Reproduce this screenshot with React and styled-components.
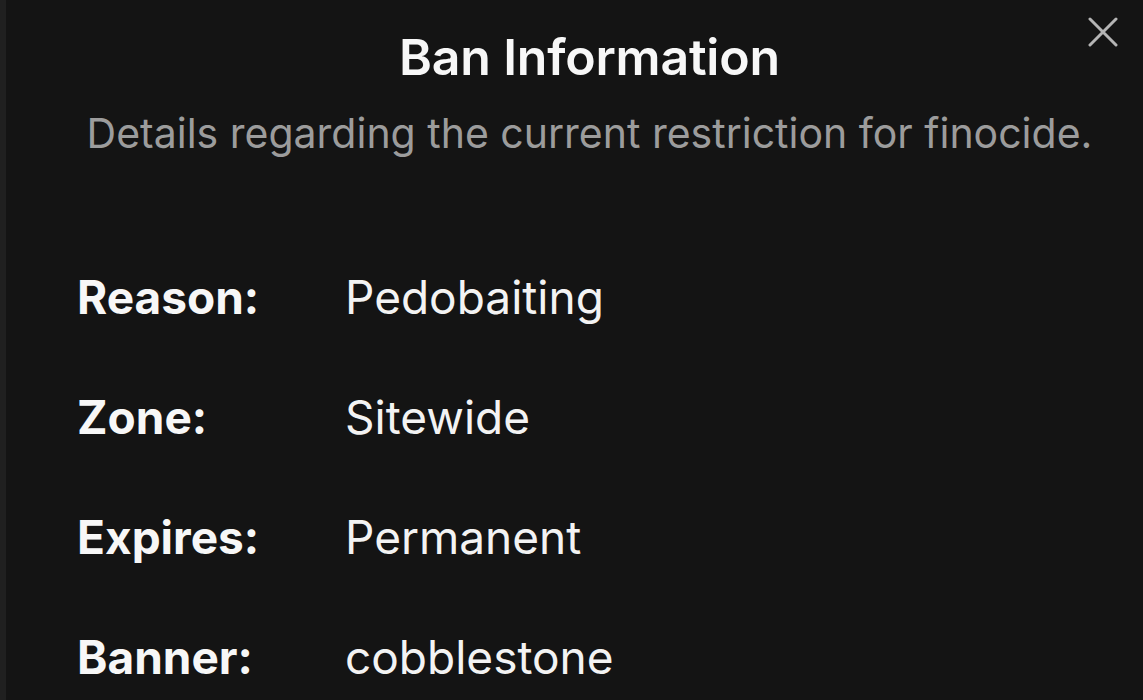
import React from "react";
import styled, { createGlobalStyle } from "styled-components";

const Global = createGlobalStyle`
  html, body { margin: 0; padding: 0; background: #141414; }
  body { font-family: Inter, "Noto Sans", "Liberation Sans", sans-serif; -webkit-font-smoothing: antialiased; }
`;

const Dialog = styled.div`
  position: relative;
  box-sizing: border-box;
  width: 1143px;
  height: 700px;
  overflow: hidden;
  background: #141414;
  border-left: 6px solid #202020;
  padding: 28px 41px 0 71px;
  color: #f5f5f5;
`;

const Header = styled.header`
  display: flex;
  flex-direction: column;
  align-items: center;
  gap: 22px;
`;

const Title = styled.h2`
  margin: 0;
  font-size: 50px;
  line-height: 58px;
  font-weight: 600;
  letter-spacing: -0.2px;
  color: #f7f7f7;
`;

const Subtitle = styled.p`
  margin: 0;
  font-size: 41px;
  line-height: 50px;
  font-weight: 400;
  color: #9c9c9c;
  white-space: nowrap;
`;

const Close = styled.button`
  position: absolute;
  top: 14px;
  right: 22px;
  width: 36px;
  height: 36px;
  padding: 0;
  border: 0;
  background: transparent;
  color: #b5b5b5;
  display: flex;
  align-items: center;
  justify-content: center;
`;

const List = styled.dl`
  margin: 79px 0 0 0;
  display: grid;
  grid-template-columns: 268px 1fr;
  grid-auto-rows: 120px;
  align-items: center;
`;

const Label = styled.dt`
  margin: 0;
  font-size: 46px;
  font-weight: 700;
  color: #f7f7f7;
`;

const Value = styled.dd`
  margin: 0;
  font-size: 46px;
  font-weight: 400;
  color: #f3f3f3;
`;

const rows = [
  ["Reason:", "Pedobaiting"],
  ["Zone:", "Sitewide"],
  ["Expires:", "Permanent"],
  ["Banner:", "cobblestone"],
];

export default function App() {
  return (
    <>
      <Global />
      <Dialog>
        <Close aria-label="Close">
          <svg width="30" height="30" viewBox="0 0 30 30" fill="none" stroke="currentColor" strokeWidth="3" strokeLinecap="round">
            <path d="M2 2 L28 28 M28 2 L2 28" />
          </svg>
        </Close>
        <Header>
          <Title>Ban Information</Title>
          <Subtitle>Details regarding the current restriction for finocide.</Subtitle>
        </Header>
        <List>
          {rows.map(([k, v]) => (
            <React.Fragment key={k}>
              <Label>{k}</Label>
              <Value>{v}</Value>
            </React.Fragment>
          ))}
        </List>
      </Dialog>
    </>
  );
}
